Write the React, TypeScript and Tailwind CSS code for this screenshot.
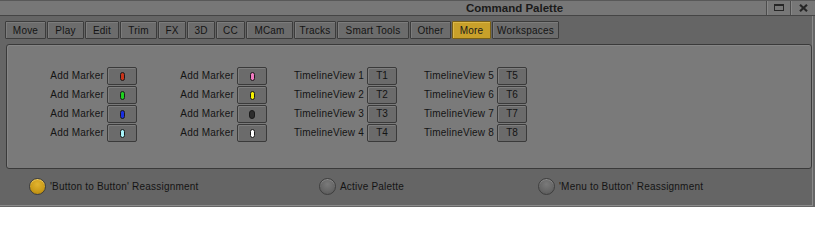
import React from "react";

const tabs: [string, number][] = [
  ["Move", 41],
  ["Play", 37],
  ["Edit", 34],
  ["Trim", 37],
  ["FX", 28],
  ["3D", 28],
  ["CC", 29],
  ["MCam", 47],
  ["Tracks", 42],
  ["Smart Tools", 72],
  ["Other", 41],
  ["More", 39],
  ["Workspaces", 67],
];

type Cell = { label: string; marker?: string; text?: string };

const rows: Cell[][] = [
  [
    { label: "Add Marker", marker: "bg-[#c8341a]" },
    { label: "Add Marker", marker: "bg-[#f07ac0]" },
    { label: "TimelineView 1", text: "T1" },
    { label: "TimelineView 5", text: "T5" },
  ],
  [
    { label: "Add Marker", marker: "bg-[#1ed01e]" },
    { label: "Add Marker", marker: "bg-[#f4f000]" },
    { label: "TimelineView 2", text: "T2" },
    { label: "TimelineView 6", text: "T6" },
  ],
  [
    { label: "Add Marker", marker: "bg-[#1a2ee0]" },
    { label: "Add Marker", marker: "bg-[#2e2e2e] w-[6px]" },
    { label: "TimelineView 3", text: "T3" },
    { label: "TimelineView 7", text: "T7" },
  ],
  [
    { label: "Add Marker", marker: "bg-[#a8f4fa]" },
    { label: "Add Marker", marker: "bg-[#ffffff]" },
    { label: "TimelineView 4", text: "T4" },
    { label: "TimelineView 8", text: "T8" },
  ],
];

function Radio({ active, label, className }: { active?: boolean; label: string; className?: string }) {
  return (
    <div className={"flex items-center " + (className ?? "")}>
      <div
        className={
          "w-[17px] h-[17px] rounded-full border border-[#3e3e3e] " +
          (active
            ? "bg-[radial-gradient(circle_at_50%_35%,#e2b430_0%,#c99a18_60%,#a57a0c_100%)] shadow-[inset_0_1px_0_#f0cc60]"
            : "bg-[radial-gradient(circle_at_50%_35%,#7a7a7a_0%,#656565_60%,#555_100%)] shadow-[inset_0_1px_0_#8c8c8c]")
        }
      />
      <span className="ml-[4px] text-[10px] tracking-[0.2px] leading-none">{label}</span>
    </div>
  );
}

export default function App() {
  return (
    <div className="w-[815px] h-[207px] bg-[#656565] font-['Liberation_Sans',Arial,sans-serif] text-[#141414] overflow-hidden">
      {/* Title bar */}
      <div className="h-[16px] flex bg-[#777777] border-t border-[#585858] border-b border-b-[#454545]">
        <div className="flex-1 pl-[466px] text-[11.5px] font-bold leading-[14px] text-[#1a1a1a]">Command Palette</div>
        <div className="w-[24px] border-l border-[#4c4c4c] shadow-[inset_1px_0_0_#888] flex items-center justify-center">
          <div className="w-[10px] h-[7px] border border-[#262626] border-t-2 -mt-[1px]" />
        </div>
        <div className="w-[25px] border-l border-[#4c4c4c] shadow-[inset_1px_0_0_#888] flex items-center justify-center">
          <svg width="9" height="8" viewBox="0 0 9 8" className="-mt-[1px]">
            <path d="M1 0.8 L8 7.2 M8 0.8 L1 7.2" stroke="#262626" strokeWidth="2.2" />
          </svg>
        </div>
      </div>

      {/* Body */}
      <div className="w-[813px] h-[190px] border-r border-b border-[#8a8a8a] flex flex-col">
        {/* Tabs */}
        <div className="mt-[5px] ml-[5px] flex gap-px h-[18px]">
          {tabs.map(([t, w]) => {
            const active = t === "More";
            return (
              <div
                key={t}
                style={{ width: w }}
                className={
                  "h-[18px] flex items-center justify-center text-[10px] tracking-[0.2px] border rounded-[1px] " +
                  (active
                    ? "bg-[#c8a02a] border-[#7a6014] shadow-[inset_1px_1px_0_#dcb848] text-[#1a1a1a]"
                    : "bg-[#6c6c6c] border-[#3c3c3c] shadow-[inset_1px_1px_0_#7c7c7c]")
                }
              >
                {t}
              </div>
            );
          })}
        </div>

        {/* Panel */}
        <div className="mt-[5px] ml-[6px] w-[806px] h-[125px] bg-[#7a7a7a] border border-[#3a3a3a] rounded-[3px] shadow-[inset_1px_1px_0_#868686]">
          <div className="pt-[22px] grid grid-cols-[130px_130px_130px_130px] gap-y-px">
            {rows.flat().map((c, i) => (
              <div key={i} className="flex items-center justify-end h-[18px]">
                <span className="text-[10px] tracking-[0.2px] leading-none mr-[3px]">{c.label}</span>
                <div className="w-[30px] h-[18px] rounded-[2px] border border-[#3a3a3a] bg-[#6b6b6b] shadow-[inset_1px_1px_0_#7e7e7e] flex items-center justify-center">
                  {c.marker ? (
                    <div className={"w-[5px] h-[9px] rounded-full border border-[#1a1a1a] " + c.marker} />
                  ) : (
                    <span className="text-[10px] leading-none">{c.text}</span>
                  )}
                </div>
              </div>
            ))}
          </div>
        </div>

        {/* Radios */}
        <div className="mt-[9px] flex">
          <Radio active label="'Button to Button' Reassignment" className="ml-[29px] w-[290px]" />
          <Radio label="Active Palette" className="w-[219px]" />
          <Radio label="'Menu to Button' Reassignment" />
        </div>
      </div>
    </div>
  );
}
